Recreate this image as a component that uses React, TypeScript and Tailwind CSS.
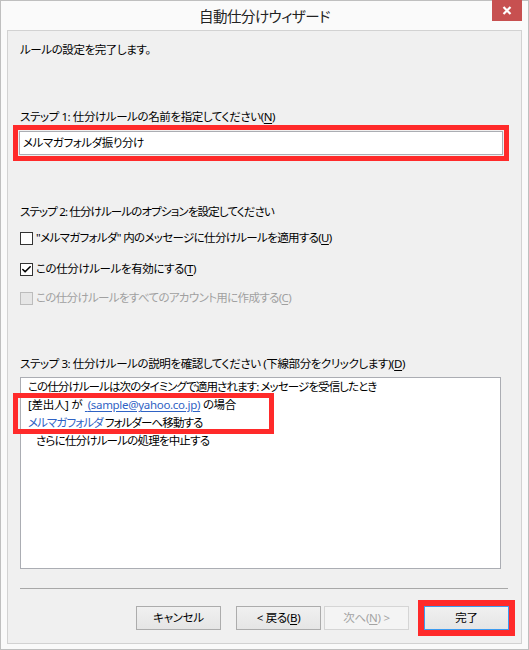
import { Check } from "lucide-react";

const FONT = {
  fontFamily: '"Noto Sans", "Noto Sans CJK JP", sans-serif',
};

function Mnemonic(props: { k: string }) {
  return (
    <span>
      (<span className="underline underline-offset-2">{props.k}</span>)
    </span>
  );
}

function CheckRow(props: {
  checked?: boolean;
  disabled?: boolean;
  tight?: boolean;
  children: React.ReactNode;
}) {
  return (
    <div className="flex items-center gap-[3px] h-4">
      <div
        className={
          props.disabled
            ? "w-[13px] h-[13px] border border-[#bcbcbc] bg-[#e6e6e6]"
            : "w-[13px] h-[13px] border border-[#333333] bg-white flex items-center justify-center"
        }
      >
        {props.checked && (
          <Check className="w-[11px] h-[11px] text-black" strokeWidth={3.5} />
        )}
      </div>
      <p
        className={
          "text-[11.5px] leading-4 whitespace-nowrap " +
          (props.tight ? "tracking-[-0.65px] " : "tracking-[-0.4px] ") +
          (props.disabled ? "text-[#a0a0a0]" : "text-black")
        }
      >
        {props.children}
      </p>
    </div>
  );
}

function WinButton(props: {
  children: React.ReactNode;
  disabled?: boolean;
  primary?: boolean;
}) {
  let cls =
    "w-[85px] h-[24px] flex items-center justify-center text-[11.5px] tracking-[-0.3px] leading-4 whitespace-nowrap border ";
  if (props.disabled) {
    cls += "border-[#d5d5d5] bg-[#f4f4f4] text-[#a3a3a3]";
  } else if (props.primary) {
    cls +=
      "border-[#3c9bf0] bg-gradient-to-b from-[#f0f0f0] to-[#e5e5e5] text-black";
  } else {
    cls +=
      "border-[#acacac] bg-gradient-to-b from-[#f0f0f0] to-[#e5e5e5] text-black";
  }
  return <div className={cls}>{props.children}</div>;
}

export default function App() {
  return (
    <div
      style={FONT}
      className="w-[529px] h-[650px] border border-[#bfbfbf] bg-[#fafafa] flex flex-col [font-feature-settings:'palt']"
    >
      <div className="grid grid-cols-[1fr_auto_1fr] h-[29px]">
        <div />
        <h1 className="text-[14.5px] tracking-[-0.5px] leading-[31px] text-[#222222] whitespace-nowrap">
          自動仕分けウィザード
        </h1>
        <div className="flex justify-end pr-[6px]">
          <div className="-mt-px w-[30px] h-[21px] bg-[#c75050] flex items-center justify-center">
            <svg width="10" height="9" viewBox="0 0 10 9">
              <path
                d="M1.5 1 L8.5 8 M8.5 1 L1.5 8"
                stroke="white"
                strokeWidth="2.2"
                strokeLinecap="butt"
              />
            </svg>
          </div>
        </div>
      </div>

      <div className="mx-[6px] h-[614px] border border-[#d2d2d2] bg-[#f0f0f0] flex flex-col pl-[12px] text-[11.5px] tracking-[-0.4px]">
        <p className="mt-[11px] leading-4 text-black">
          ルールの設定を完了します。
        </p>

        <p className="mt-[51px] leading-4 text-black whitespace-nowrap">
          ステップ 1: 仕分けルールの名前を指定してください
          <Mnemonic k="N" />
        </p>
        <div className="-ml-[7px] w-[496px] border-[5px] border-[#ff2a2a] p-px">
          <div className="h-[24px] border border-[#abadb3] bg-white flex items-center pl-[3px] text-black">
            メルマガフォルダ振り分け
          </div>
        </div>

        <p className="mt-[43px] leading-4 text-black whitespace-nowrap tracking-[-0.85px]">
          ステップ{"\u00a0"}2: 仕分けルールのオプションを設定してください
        </p>
        <div className="mt-[10px]">
          <CheckRow tight>
            "メルマガフォルダ" 内のメッセージに仕分けルールを適用する
            <Mnemonic k="U" />
          </CheckRow>
        </div>
        <div className="mt-[15px]">
          <CheckRow checked>
            この仕分けルールを有効にする
            <Mnemonic k="T" />
          </CheckRow>
        </div>
        <div className="mt-[13px]">
          <CheckRow disabled tight>
            この仕分けルールをすべてのアカウント用に作成する
            <Mnemonic k="C" />
          </CheckRow>
        </div>

        <p className="mt-[50px] leading-4 text-black whitespace-nowrap">
          ステップ 3: 仕分けルールの説明を確認してください (下線部分をクリックします)
          <Mnemonic k="D" />
        </p>
        <div className="relative mt-[5px] w-[481px] h-[192px] border border-[#abadb3] bg-white pl-[7px] leading-[18px] text-black whitespace-nowrap">
          <p className="tracking-[-0.9px]">
            この仕分けルールは次のタイミングで適用されます: メッセージを受信したとき
          </p>
          <p className="tracking-[-0.3px]">
            [差出人] が{" "}
            <span className="underline underline-offset-2 text-[#2f62c4]">
              {"\u00a0"}(sample@yahoo.co.jp)
            </span>{" "}
            の場合
          </p>
          <p className="tracking-[-0.9px]">
            <span className="underline underline-offset-2 text-[#2f62c4]">
              メルマガフォルダ
            </span>
            {"\u00a0"}フォルダーへ移動する
          </p>
          <p className="pl-[8px] tracking-[-0.8px]">
            さらに仕分けルールの処理を中止する
          </p>
          <div className="absolute -left-[8px] top-[15px] w-[261px] h-[41px] border-[5px] border-[#ff2a2a]" />
        </div>

        <div className="mt-[19px] w-[488px] h-px bg-[#a8a8a8]" />

        <div className="mt-[11px] flex items-center justify-end pr-[6px]">
          <WinButton>キャンセル</WinButton>
          <div className="ml-[15px]">
            <WinButton>
              &lt;{"\u00a0"}戻る
              <Mnemonic k="B" />
            </WinButton>
          </div>
          <div className="ml-[3px]">
            <WinButton disabled>
              次へ
              <Mnemonic k="N" />
              {"\u00a0>"}
            </WinButton>
          </div>
          <div className="ml-[9px] border-[6px] border-[#ff2a2a]">
            <WinButton primary>完了</WinButton>
          </div>
        </div>
      </div>
    </div>
  );
}
